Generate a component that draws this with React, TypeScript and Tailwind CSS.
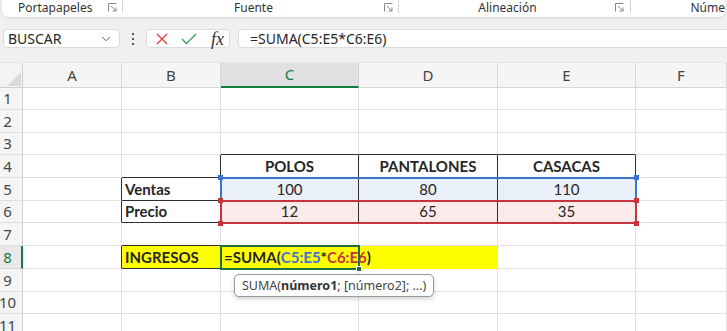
import React from "react";
import { ChevronDown } from "lucide-react";

const cols = ["A", "B", "C", "D", "E", "F"];
const rows = [1, 2, 3, 4, 5, 6, 7, 8, 9, 10, 11];

const colStart = ["col-start-1", "col-start-2", "col-start-3", "col-start-4", "col-start-5", "col-start-6", "col-start-7"];
const rowStart = [
  "row-start-1",
  "row-start-2",
  "row-start-3",
  "row-start-4",
  "row-start-5",
  "row-start-6",
  "row-start-7",
  "row-start-8",
  "row-start-9",
  "row-start-10",
  "row-start-11",
  "row-start-12",
];

const darkRight = new Set(["B4", "C4", "D4", "E4", "A5", "A6", "B5", "B6", "C5", "D5", "C6", "D6", "E5", "E6", "A8", "B8"]);
const darkBottom = new Set(["C3", "D3", "E3", "B4", "C4", "D4", "E4", "B5", "B6", "C5", "D5", "E5", "B7", "B8"]);

const bgs: Record<string, string> = {
  C5: "bg-[#eaf0f9]",
  D5: "bg-[#eaf0f9]",
  E5: "bg-[#eaf0f9]",
  C6: "bg-[#fbeaea]",
  D6: "bg-[#fbeaea]",
  E6: "bg-[#fbeaea]",
  B8: "bg-[#ffff00]",
  C8: "bg-[#ffff00]",
  D8: "bg-[#ffff00]",
};

const content: Record<string, { t: string; bold?: boolean; left?: boolean }> = {
  C4: { t: "POLOS", bold: true },
  D4: { t: "PANTALONES", bold: true },
  E4: { t: "CASACAS", bold: true },
  B5: { t: "Ventas", bold: true, left: true },
  C5: { t: "100" },
  D5: { t: "80" },
  E5: { t: "110" },
  B6: { t: "Precio", bold: true, left: true },
  C6: { t: "12" },
  D6: { t: "65" },
  E6: { t: "35" },
  B8: { t: "INGRESOS", bold: true, left: true },
};

function cellClass(id: string) {
  const r = darkRight.has(id) ? "border-r-[#2f2f2f]" : "border-r-[#e1e1e1]";
  let b = darkBottom.has(id) ? "border-b-[#2f2f2f]" : "border-b-[#e1e1e1]";
  if (id === "C8" || id === "D8") b = "border-b-[#ffff00]";
  const bg = bgs[id] ?? "bg-white";
  return `border-r border-b ${r} ${b} ${bg}`;
}

const Launcher = () => (
  <svg width="9" height="9" viewBox="0 0 9 9" fill="none" stroke="#8a8a8a" strokeWidth="1">
    <path d="M0.5 8.5V0.5H8.5" />
    <path d="M3 3L8 8" />
    <path d="M8 4.5V8H4.5" />
  </svg>
);

const Sep = () => <div className="w-px h-[13px] bg-[#d6d6d6] self-start" />;

const Handle = ({ pos, color }: { pos: string; color: string }) => (
  <div className={`absolute w-[5px] h-[5px] ${pos} ${color}`} />
);

export default function App() {
  return (
    <div
      className="w-[727px] h-[331px] overflow-hidden bg-[#f0f0f0] text-[#262626]"
      style={{ fontFamily: '"Noto Sans", "Open Sans", sans-serif' }}
    >
      {/* ribbon group labels */}
      <div className="h-[17px] mx-[2px] bg-white rounded-b-[6px] shadow-[0_1px_3px_rgba(0,0,0,0.12)] flex items-start text-[12px] leading-[15px] text-[#333]">
        <div className="w-[120px] flex items-center pl-[16px] pr-[5px] justify-between">
          <span>Portapapeles</span>
          <Launcher />
        </div>
        <Sep />
        <div className="w-[277px] flex items-center pr-[5px]">
          <span className="flex-1 text-center">Fuente</span>
          <Launcher />
        </div>
        <Sep />
        <div className="w-[232px] flex items-center pr-[6px]">
          <span className="flex-1 text-center">Alineación</span>
          <Launcher />
        </div>
        <Sep />
        <div className="flex-1 pl-[59px]">Núme</div>
      </div>

      {/* formula bar */}
      <div className="mt-[12px] h-[19px] flex items-stretch pl-[3px] text-[14px]">
        <div className="w-[117px] bg-white border border-[#dcdcdc] rounded-[4px] flex items-center pl-[4px] pr-[6px] justify-between">
          <span className="leading-none">BUSCAR</span>
          <ChevronDown size={14} strokeWidth={1.5} className="text-[#444]" />
        </div>
        <div className="w-[26px] flex flex-col items-center justify-center gap-[3px]">
          <div className="w-[2px] h-[2px] bg-[#555]" />
          <div className="w-[2px] h-[2px] bg-[#555]" />
          <div className="w-[2px] h-[2px] bg-[#555]" />
        </div>
        <div className="w-[84px] bg-white border border-[#dcdcdc] rounded-[4px] flex items-center pl-[9px] gap-[13px]">
          <svg width="12" height="12" viewBox="0 0 12 12" stroke="#e2413f" strokeWidth="1.4">
            <path d="M1 1L11 11M11 1L1 11" />
          </svg>
          <svg width="16" height="12" viewBox="0 0 16 12" fill="none" stroke="#3aa55a" strokeWidth="1.4">
            <path d="M1 6L5.5 10.5L15 1" />
          </svg>
          <span className="italic text-[18px] leading-none text-[#333] ml-[1px]" style={{ fontFamily: '"Liberation Serif", serif' }}>
            fx
          </span>
        </div>
        <div className="flex-1 ml-[8px] bg-white border border-[#dcdcdc] border-r-0 rounded-l-[4px] flex items-center pl-[11px]">
          <span className="leading-none">=SUMA(C5:E5*C6:E6)</span>
        </div>
      </div>

      {/* sheet grid */}
      <div className="mt-[14px] border-t border-[#e4e4e4] grid grid-cols-[23px_99px_99px_138px_139px_138px_1fr] grid-rows-[25px_22px_23px_22px_23px_23px_22px_23px_23px_23px_22px_23px]">
        {/* corner */}
        <div className="col-start-1 row-start-1 bg-[#f3f3f3] border-r border-b border-[#cfcfcf] flex items-end justify-end">
          <svg width="17" height="17" viewBox="0 0 17 17">
            <polygon points="16,2 16,16 2,16" fill="#dadada" />
          </svg>
        </div>
        {cols.map((c, ci) =>
          c === "C" ? (
            <div
              key={c}
              className={`${colStart[ci + 1]} row-start-1 bg-[#e1e1e1] border-r border-[#d0d0d0] border-b-2 border-b-[#137c43] flex items-center justify-center text-[15px] text-[#137c43]`}
            >
              {c}
            </div>
          ) : (
            <div
              key={c}
              className={`${colStart[ci + 1]} row-start-1 bg-[#f5f5f5] border-r border-b border-[#d6d6d6] flex items-center justify-center text-[15px] text-[#444]`}
            >
              {c}
            </div>
          )
        )}
        {rows.map((r) => (
          <React.Fragment key={r}>
            {r === 8 ? (
              <div
                className={`col-start-1 ${rowStart[r]} bg-[#e9e9e9] border-r-2 border-r-[#137c43] border-b border-b-[#d6d6d6] flex items-center justify-center pr-[6px] text-[15px] text-[#137c43]`}
              >
                {r}
              </div>
            ) : (
              <div
                className={`col-start-1 ${rowStart[r]} bg-[#f5f5f5] border-r border-b border-r-[#cfcfcf] border-b-[#dedede] flex items-center justify-center pr-[7px] text-[15px] text-[#444]`}
              >
                {r}
              </div>
            )}
            {cols.map((c, ci) => {
              const id = `${c}${r}`;
              const v = content[id];
              return (
                <div
                  key={id}
                  className={`${colStart[ci + 1]} ${rowStart[r]} ${cellClass(id)} flex items-end pb-[1px] text-[15px] leading-[19px] ${v?.left ? "justify-start pl-[3px]" : "justify-center"} ${v?.bold ? "font-bold" : ""}`}
                  style={{ fontFamily: 'Lato, "Liberation Sans", sans-serif' }}
                >
                  {v?.t}
                </div>
              );
            })}
          </React.Fragment>
        ))}

        {/* range highlight C5:E5 */}
        <div className="col-start-4 col-end-7 row-start-6 row-end-7 -m-px border-2 border-[#3d72cf] relative pointer-events-none">
          <Handle pos="-left-[4px] -top-[4px]" color="bg-[#3d72cf]" />
          <Handle pos="-right-[4px] -top-[4px]" color="bg-[#3d72cf]" />
        </div>
        {/* range highlight C6:E6 */}
        <div className="col-start-4 col-end-7 row-start-7 row-end-8 -m-px border-2 border-[#c8323d] relative pointer-events-none">
          <Handle pos="-left-[4px] -top-[4px]" color="bg-[#c8323d]" />
          <Handle pos="-right-[4px] -top-[4px]" color="bg-[#c8323d]" />
          <Handle pos="-left-[4px] -bottom-[4px]" color="bg-[#c8323d]" />
          <Handle pos="-right-[4px] -bottom-[4px]" color="bg-[#c8323d]" />
        </div>
        {/* active cell C8 */}
        <div
          className="col-start-4 col-end-5 row-start-9 row-end-10 -m-px border-2 border-[#1e6e3f] relative z-10 flex items-end pb-[1px] pl-[2px] whitespace-nowrap text-[15px] leading-[19px] font-bold"
          style={{ fontFamily: 'Lato, "Liberation Sans", sans-serif' }}
        >
          <span>=SUMA(</span>
          <span className="text-[#3d72cf]">C</span>
          <span className="inline-block w-px h-[16px] bg-[#2b4fa0] self-center mt-[1px]" />
          <span className="text-[#3d72cf]">5:E5</span>
          <span>*</span>
          <span className="text-[#c8323d]">C6:E6</span>
          <span>)</span>
          <div className="absolute -right-[4px] -bottom-[4px] w-[6px] h-[6px] bg-[#1e6e3f] border border-white" />
          <div
            className="absolute left-[12px] top-[27px] h-[23px] px-[7px] flex items-center bg-white border border-[#9a9a9a] rounded-[5px] shadow-[0_2px_4px_rgba(0,0,0,0.18)] text-[12.5px] font-normal text-[#444]"
            style={{ fontFamily: '"Noto Sans", "Open Sans", sans-serif' }}
          >
            SUMA(<b className="font-bold text-[#333]">número1</b>; [número2]; ...)
          </div>
        </div>
      </div>
    </div>
  );
}
